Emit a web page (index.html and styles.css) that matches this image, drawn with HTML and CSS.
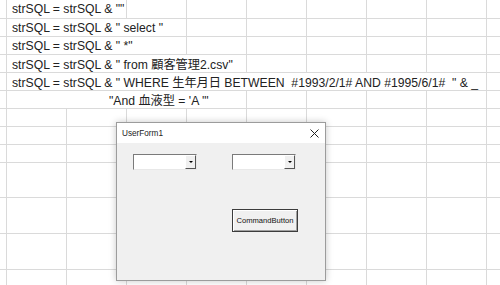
FILE: index.html
```html
<!DOCTYPE html>
<html lang="ja">
<head>
<meta charset="utf-8">
<link rel="stylesheet" href="styles.css">
</head>
<body>
<div class="sheet">
  <div class="row h19"><div class="c0"></div><div class="cell text span2">strSQL = strSQL &amp; ""</div><div class="cell"></div><div class="cell"></div><div class="cell"></div><div class="cell"></div><div class="cell"></div><div class="cell"></div><div class="cell last"></div></div>
  <div class="row"><div class="c0"></div><div class="cell text span3">strSQL = strSQL &amp; " select "</div><div class="cell"></div><div class="cell"></div><div class="cell"></div><div class="cell"></div><div class="cell"></div><div class="cell last"></div></div>
  <div class="row"><div class="c0"></div><div class="cell text span3">strSQL = strSQL &amp; " *"</div><div class="cell"></div><div class="cell"></div><div class="cell"></div><div class="cell"></div><div class="cell"></div><div class="cell last"></div></div>
  <div class="row"><div class="c0"></div><div class="cell text span4">strSQL = strSQL &amp; " from 顧客管理2.csv"</div><div class="cell"></div><div class="cell"></div><div class="cell"></div><div class="cell"></div><div class="cell last"></div></div>
  <div class="row"><div class="c0"></div><div class="cell text span8">strSQL = strSQL &amp; " WHERE 生年月日 BETWEEN  #1993/2/1# AND #1995/6/1#  " &amp; _</div><div class="cell last"></div></div>
  <div class="row"><div class="c0"></div><div class="cell text indent span4">"And 血液型 = 'A '"</div><div class="cell"></div><div class="cell"></div><div class="cell"></div><div class="cell"></div><div class="cell last"></div></div>
  <div class="row"><div class="c0"></div><div class="cell"></div><div class="cell"></div><div class="cell"></div><div class="cell"></div><div class="cell"></div><div class="cell"></div><div class="cell"></div><div class="cell"></div><div class="cell last"></div></div>
  <div class="row"><div class="c0"></div><div class="cell"></div><div class="cell"></div><div class="cell"></div><div class="cell"></div><div class="cell"></div><div class="cell"></div><div class="cell"></div><div class="cell"></div><div class="cell last"></div></div>
  <div class="row"><div class="c0"></div><div class="cell"></div><div class="cell"></div><div class="cell"></div><div class="cell"></div><div class="cell"></div><div class="cell"></div><div class="cell"></div><div class="cell"></div><div class="cell last"></div></div>
  <div class="row h35"><div class="c0"></div><div class="cell"></div><div class="cell"></div><div class="cell"></div><div class="cell"></div><div class="cell"></div><div class="cell"></div><div class="cell"></div><div class="cell"></div><div class="cell last"></div></div>
  <div class="row h36"><div class="c0"></div><div class="cell"></div><div class="cell"></div><div class="cell"></div><div class="cell"></div><div class="cell"></div><div class="cell"></div><div class="cell"></div><div class="cell"></div><div class="cell last"></div></div>
  <div class="row h36"><div class="c0"></div><div class="cell"></div><div class="cell"></div><div class="cell"></div><div class="cell"></div><div class="cell"></div><div class="cell"></div><div class="cell"></div><div class="cell"></div><div class="cell last"></div></div>
  <div class="row h16"><div class="c0"></div><div class="cell"></div><div class="cell"></div><div class="cell"></div><div class="cell"></div><div class="cell"></div><div class="cell"></div><div class="cell"></div><div class="cell"></div><div class="cell last"></div></div>
</div>

<div class="dialog">
  <div class="titlebar">
    <span class="title">UserForm1</span>
    <svg class="close" width="9" height="9" viewBox="0 0 9 9"><path d="M0.5 0.5L8.5 8.5M8.5 0.5L0.5 8.5" stroke="#222" stroke-width="1" fill="none"/></svg>
  </div>
  <div class="form">
    <div class="combos">
      <div class="combo"><div class="field"></div><div class="drop"><span class="arrow"></span></div></div>
      <div class="combo"><div class="field"></div><div class="drop"><span class="arrow"></span></div></div>
    </div>
    <button class="cmd">CommandButton</button>
  </div>
</div>
</body>
</html>
```
FILE: styles.css
```css
html, body {
  margin: 0;
  padding: 0;
  background: #ffffff;
  overflow: hidden;
}
body {
  width: 500px;
  height: 285px;
  position: relative;
  font-family: "Liberation Sans", "Noto Sans CJK JP", sans-serif;
}
.sheet {
  display: flex;
  flex-direction: column;
  width: 500px;
  height: 285px;
  overflow: hidden;
}
.row {
  display: flex;
  height: 18px;
  flex: none;
}
.row.h16 { height: 16px; }
.row.h19 { height: 19px; }
.row.h35 { height: 35px; }
.row.h36 { height: 36px; }
.c0 {
  width: 7px;
  flex: none;
  box-sizing: border-box;
  border-right: 1px solid #dadada;
  border-bottom: 1px solid #dadada;
}
.cell {
  width: 60px;
  flex: none;
  box-sizing: border-box;
  border-right: 1px solid #dadada;
  border-bottom: 1px solid #dadada;
}
.cell.last { flex: 1; border-right: none; }
.cell.span2 { width: 120px; }
.cell.span3 { width: 180px; }
.cell.span4 { width: 240px; }
.cell.span8 { width: 480px; }
.text {
  font-size: 12.2px;
  color: #222;
  white-space: pre;
  padding-left: 5px;
  display: flex;
  align-items: center;
  overflow: visible;
}
.text.indent { padding-left: 102px; }

.dialog {
  position: absolute;
  left: 116px;
  top: 122px;
  width: 210px;
  height: 159px;
  box-sizing: border-box;
  border: 1px solid #9c9c9c;
  background: #f0f0f0;
  box-shadow: 0 0 7px rgba(0,0,0,0.22);
  display: flex;
  flex-direction: column;
}
.titlebar {
  height: 20px;
  background: #ffffff;
  display: flex;
  align-items: center;
  justify-content: space-between;
  padding: 0 6px 0 5px;
  flex: none;
}
.title {
  font-family: "Liberation Sans", sans-serif;
  font-size: 8.2px;
  color: #222;
}
.close { display: block; }
.form {
  padding: 11px 0 0 16px;
  display: flex;
  flex-direction: column;
  align-items: flex-start;
}
.combos {
  display: flex;
  gap: 35px;
}
.combo {
  width: 64px;
  height: 16px;
  box-sizing: border-box;
  border-top: 1px solid #7a7a7a;
  border-left: 1px solid #7a7a7a;
  border-right: 1px solid #e8e8e8;
  border-bottom: 1px solid #e8e8e8;
  background: #ffffff;
  display: flex;
}
.field { flex: 1; }
.drop {
  width: 11px;
  box-sizing: border-box;
  background: #f0f0f0;
  border-top: 1px solid #ffffff;
  border-left: 1px solid #ffffff;
  border-right: 1px solid #555;
  border-bottom: 1px solid #555;
  display: flex;
  align-items: center;
  justify-content: center;
}
.arrow {
  width: 0;
  height: 0;
  border-left: 2px solid transparent;
  border-right: 2px solid transparent;
  border-top: 2px solid #000;
}
.cmd {
  margin: 39px 0 0 99px;
  width: 66px;
  height: 23px;
  box-sizing: border-box;
  border: 1px solid #3c3c3c;
  box-shadow: inset 1px 1px 0 #ffffff, inset -1px -1px 0 #a0a0a0;
  background: #f0f0f0;
  font-family: "Liberation Sans", sans-serif;
  font-size: 7.6px;
  color: #111;
  padding: 0;
}
```
